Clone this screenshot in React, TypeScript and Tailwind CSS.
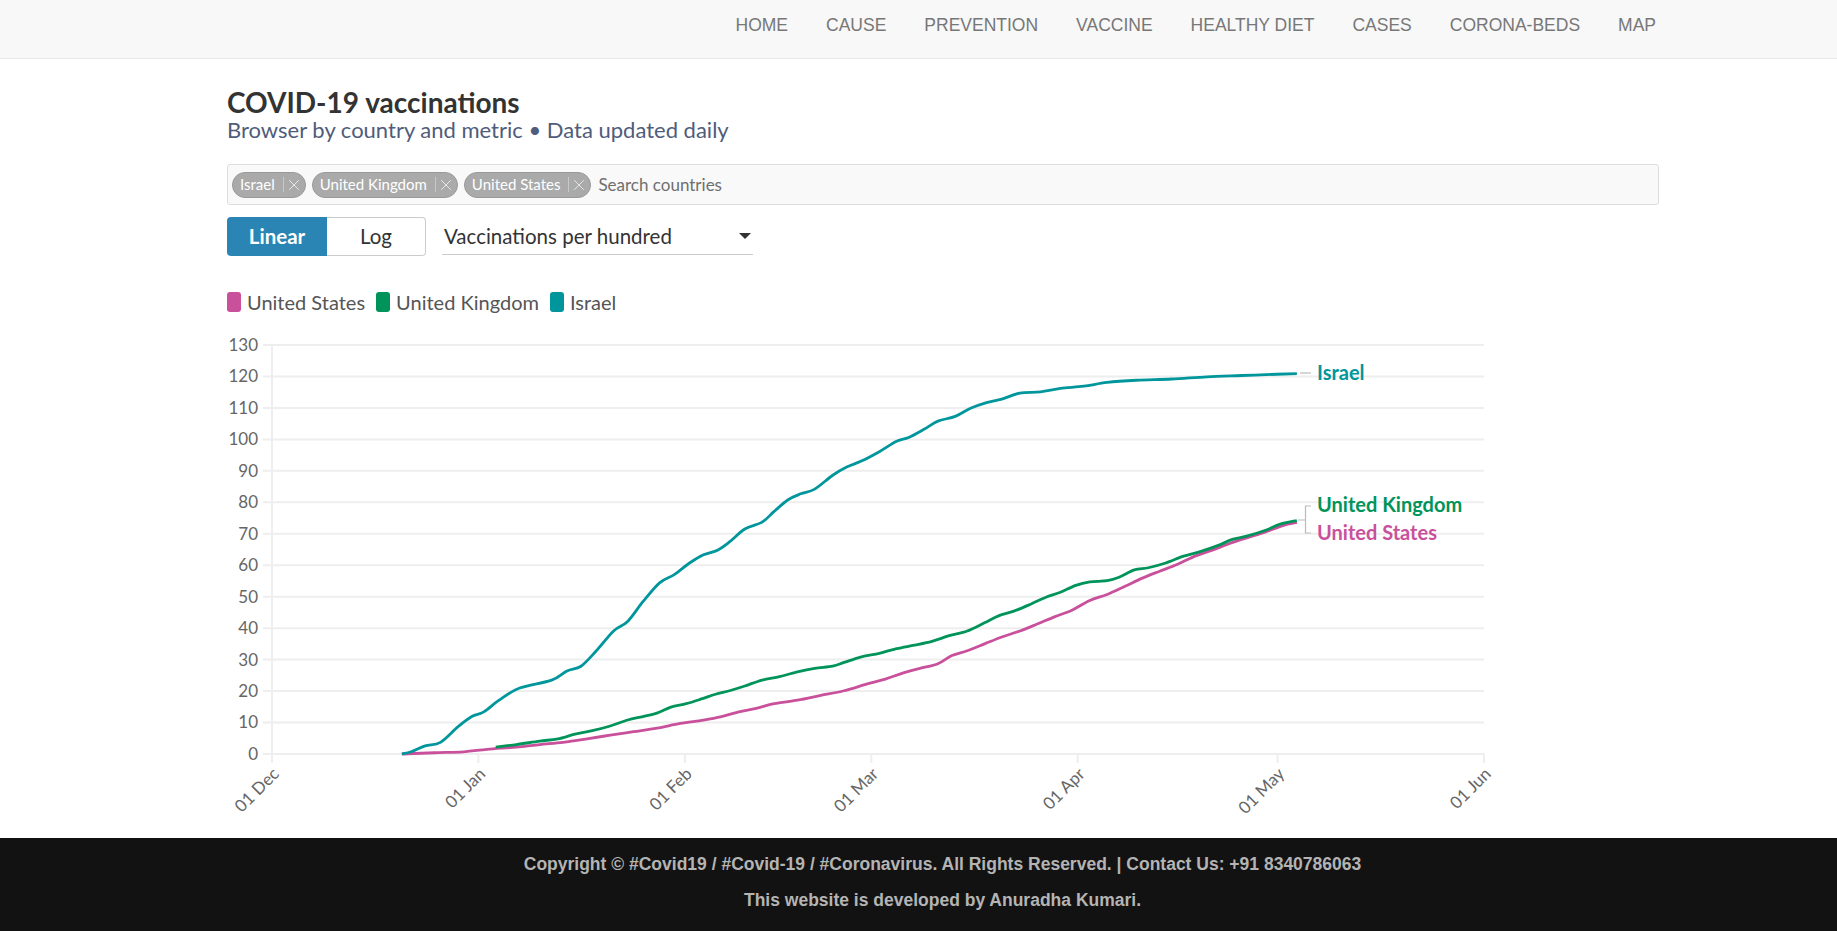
import { X } from "lucide-react";

type Point = [number, number];

// days since 01 Dec, vaccinations per hundred
const israel: Point[] = [
  [19.5, 0], [20.9, 0.7], [23, 2.6], [25.3, 3.7], [27.9, 8.6], [30, 11.9], [31.8, 13.4], [34.1, 17.1],
  [37.1, 20.9], [42, 23.5], [44.3, 26.4], [46.4, 27.9], [48.7, 32.8], [51.3, 39.1], [53.4, 42.1],
  [55.7, 48.4], [58.2, 54.4], [60.4, 57], [62.7, 60.7], [64.8, 63.3], [66.9, 64.8], [68.7, 67.4],
  [71, 71.5], [73.6, 73.7], [75.4, 77.1], [77.5, 80.8], [79.4, 82.7], [81.5, 84.2], [84.2, 88.6],
  [86.3, 91.2], [88.5, 93.1], [91.2, 96.1], [93.8, 99.4], [95.6, 100.6], [97.9, 103.2], [100, 105.8],
  [102.6, 107.3], [104.9, 109.9], [107.3, 111.7], [109.6, 112.8], [112.3, 114.7], [115.4, 115.1],
  [118.4, 116.2], [121.9, 116.9], [125.4, 118.1], [129.8, 118.8], [135.1, 119.2], [140.4, 119.9],
  [145.6, 120.3], [150.9, 120.7], [153.9, 120.9],
];

const unitedKingdom: Point[] = [
  [33.6, 2.2], [36.7, 3], [40.2, 4.1], [42.9, 4.8], [45.5, 6.3], [48.1, 7.4], [50.8, 8.9], [53.4, 10.8],
  [55.7, 11.9], [57.8, 13], [59.9, 14.9], [62.2, 16], [64.5, 17.5], [66.6, 19], [68.7, 20.1], [71, 21.6],
  [73.6, 23.5], [76.2, 24.6], [78.9, 26.1], [81.5, 27.2], [84.2, 27.9], [85.9, 29.1], [88.5, 30.9],
  [91.2, 32], [93.8, 33.5], [96.5, 34.6], [99.1, 35.8], [101.7, 37.6], [104.4, 39.1], [107, 41.7],
  [109.1, 43.9], [111.4, 45.4], [114, 47.7], [116.3, 49.9], [118.4, 51.4], [120.7, 53.6], [122.8, 54.7],
  [125.4, 55.1], [127.2, 56.2], [129.5, 58.5], [131.6, 59.2], [134.2, 60.7], [136.9, 62.9], [139.5, 64.4],
  [142.1, 66.3], [144.2, 68.2], [146.5, 69.3], [149.2, 71.1], [151.3, 73], [153.9, 74.2],
];

const unitedStates: Point[] = [
  [19.5, 0], [24.4, 0.4], [28.8, 0.7], [32.3, 1.5], [36.7, 2.2], [40.2, 3], [43.7, 3.7], [47.3, 4.8],
  [50.8, 6], [54.3, 7.1], [57.8, 8.2], [61.3, 9.7], [64.8, 10.8], [67.5, 11.9], [70.1, 13.4], [72.7, 14.5],
  [75.4, 16], [78.9, 17.1], [82.4, 18.6], [85.9, 20.1], [89.4, 22.3], [92.1, 23.8], [94.7, 25.7],
  [97.3, 27.2], [100, 28.7], [102.1, 31.3], [104.4, 32.8], [107, 35], [109.6, 37.2], [112.3, 39.1],
  [114.9, 41.3], [117.5, 43.6], [120.2, 45.8], [122.8, 48.8], [125.4, 50.7], [128.1, 53.3], [130.7, 55.9],
  [133.3, 58.1], [136, 60.3], [138.6, 62.9], [141.2, 64.8], [143.9, 67], [146.5, 68.8], [149.2, 70.6],
  [151.8, 72.6], [153.9, 73.6],
];

const COLORS = {
  us: "#c9509b",
  uk: "#00945a",
  il: "#00969c",
};

const months = [
  { label: "01 Dec", day: 0 },
  { label: "01 Jan", day: 31 },
  { label: "01 Feb", day: 62 },
  { label: "01 Mar", day: 90 },
  { label: "01 Apr", day: 121 },
  { label: "01 May", day: 151 },
  { label: "01 Jun", day: 182 },
];

const navItems = ["HOME", "CAUSE", "PREVENTION", "VACCINE", "HEALTHY DIET", "CASES", "CORONA-BEDS", "MAP"];

const X0 = 45;
const X1 = 1257;
const Y0 = 432;
const Y130 = 23;
const sx = (d: number) => X0 + (d * (X1 - X0)) / 182;
const sy = (v: number) => Y0 - (v * (Y0 - Y130)) / 130;

// catmull-rom through the points, converted to cubic beziers
function linePath(pts: Point[]) {
  const p = pts.map(([d, v]) => [sx(d), sy(v)]);
  let d = `M${p[0][0]},${p[0][1]}`;
  for (let i = 0; i < p.length - 1; i++) {
    const a = p[i - 1] || p[i];
    const b = p[i];
    const c = p[i + 1];
    const e = p[i + 2] || c;
    const c1x = b[0] + (c[0] - a[0]) / 6;
    const c1y = b[1] + (c[1] - a[1]) / 6;
    const c2x = c[0] - (e[0] - b[0]) / 6;
    const c2y = c[1] - (e[1] - b[1]) / 6;
    d += ` C${c1x},${c1y} ${c2x},${c2y} ${c[0]},${c[1]}`;
  }
  return d;
}

function Chip({ name }: { name: string }) {
  return (
    <div className="flex h-[26px] items-center rounded-full border border-[#999] bg-[#aaa] pl-[7px] pr-[2px] text-[15px] text-white">
      <span>{name}</span>
      <span className="ml-[8px] h-[15px] w-px bg-[#c8c8c8]" />
      <X size={18} strokeWidth={1.2} className="ml-[1px] text-[#eee]" />
    </div>
  );
}

function Chart() {
  const ticks = Array.from({ length: 14 }, (_, i) => i * 10);
  return (
    <svg width={1432} height={516} className="block font-['Lato',sans-serif]">
      {ticks.map((t) => (
        <g key={t}>
          <line x1={36} x2={X1} y1={sy(t)} y2={sy(t)} stroke="#eeeeee" strokeWidth={2} />
          <text x={31} y={sy(t)} dy="0.35em" textAnchor="end" fontSize={17} fill="#666">
            {t}
          </text>
        </g>
      ))}
      <line x1={X0} x2={X0} y1={Y130} y2={Y0 + 9} stroke="#eeeeee" strokeWidth={2} />
      {months.map((m) => (
        <g key={m.label}>
          <line x1={sx(m.day)} x2={sx(m.day)} y1={Y0} y2={Y0 + 9} stroke="#eeeeee" strokeWidth={2} />
          <text
            x={sx(m.day) + 8}
            y={Y0 + 21}
            textAnchor="end"
            fontSize={17}
            fill="#666"
            transform={`rotate(-45 ${sx(m.day) + 8} ${Y0 + 21})`}
          >
            {m.label}
          </text>
        </g>
      ))}

      <path d={linePath(unitedStates)} fill="none" stroke={COLORS.us} strokeWidth={2.8} strokeLinejoin="round" />
      <path d={linePath(unitedKingdom)} fill="none" stroke={COLORS.uk} strokeWidth={2.8} strokeLinejoin="round" />
      <path d={linePath(israel)} fill="none" stroke={COLORS.il} strokeWidth={2.8} strokeLinejoin="round" />

      {/* end labels */}
      <line x1={1073} x2={1084} y1={51} y2={51} stroke="#bbb" strokeWidth={1.2} />
      <text x={1090} y={51} dy="0.35em" fontSize={20} fontWeight={700} fill={COLORS.il}>
        Israel
      </text>
      <path d="M1071,198 H1078.5 M1084,184 H1078.5 V211 H1084" fill="none" stroke="#bbb" strokeWidth={1.2} />
      <text x={1090} y={183} dy="0.35em" fontSize={20} fontWeight={700} fill={COLORS.uk}>
        United Kingdom
      </text>
      <text x={1090} y={211} dy="0.35em" fontSize={20} fontWeight={700} fill={COLORS.us}>
        United States
      </text>
    </svg>
  );
}

export default function App() {
  return (
    <div className="min-h-screen bg-white">
      <nav className="flex h-[59px] items-center justify-end border-b border-[#e7e7e7] bg-[#f8f8f8] pr-[162px] pb-[7px] font-['Liberation_Sans',Arial,sans-serif]">
        {navItems.map((item) => (
          <a key={item} href="#" className="px-[19px] text-[17.5px] text-[#777]">
            {item}
          </a>
        ))}
      </nav>

      <main className="h-[779px] pl-[227px] pt-[28px] font-['Lato',sans-serif]">
        <div className="w-[1432px]">
          <h1 className="text-[28px] leading-[30px] font-bold text-[#333]">COVID-19 vaccinations</h1>
          <p className="text-[22px] leading-[26px] text-[#4f5c7b]">
            Browser by country and metric • Data updated daily
          </p>

          <div className="mt-[21px] flex h-[41px] items-center gap-[6px] rounded-[3px] border border-[#ddd] bg-[#f9f9f9] pl-[4px]">
            <Chip name="Israel" />
            <Chip name="United Kingdom" />
            <Chip name="United States" />
            <input
              placeholder="Search countries"
              className="ml-[1px] flex-1 bg-transparent text-[17px] text-[#333] outline-none placeholder:text-[#6f6f6f]"
            />
          </div>

          <div className="mt-[12px] flex items-center">
            <button className="h-[39px] w-[100px] rounded-l-[4px] bg-[#2a85b5] text-[20.5px] font-bold text-white">
              Linear
            </button>
            <button className="h-[39px] w-[99px] rounded-r-[4px] border border-l-0 border-[#ccc] bg-white text-[20.5px] text-[#333]">
              Log
            </button>
            <div className="ml-[16px] flex h-[37px] w-[311px] items-center justify-between border-b border-[#ccc] pl-[2px] pr-[2px] text-[20.5px] text-[#333]">
              <span>Vaccinations per hundred</span>
              <span className="h-0 w-0 border-x-[6px] border-t-[6px] border-x-transparent border-t-[#333]" />
            </div>
          </div>

          <div className="mt-[36px] flex h-[20px] items-center text-[20px] text-[#555]">
            <span className="h-[20px] w-[14px] rounded-[3px]" style={{ background: COLORS.us }} />
            <span className="ml-[6px]">United States</span>
            <span className="ml-[11px] h-[20px] w-[14px] rounded-[3px]" style={{ background: COLORS.uk }} />
            <span className="ml-[6px]">United Kingdom</span>
            <span className="ml-[11px] h-[20px] w-[14px] rounded-[3px]" style={{ background: COLORS.il }} />
            <span className="ml-[6px]">Israel</span>
          </div>

          <div className="mt-[10px]">
            <Chart />
          </div>
        </div>
      </main>

      <footer className="flex h-[93px] flex-col items-center bg-[#121212] pl-[48px] pt-[16px] font-['Liberation_Sans',Arial,sans-serif] text-[17.5px] leading-[20px] font-bold text-[#b4b4b4]">
        <p>Copyright © #Covid19 / #Covid-19 / #Coronavirus. All Rights Reserved. | Contact Us: +91 8340786063</p>
        <p className="mt-[16px]">This website is developed by Anuradha Kumari.</p>
      </footer>
    </div>
  );
}
